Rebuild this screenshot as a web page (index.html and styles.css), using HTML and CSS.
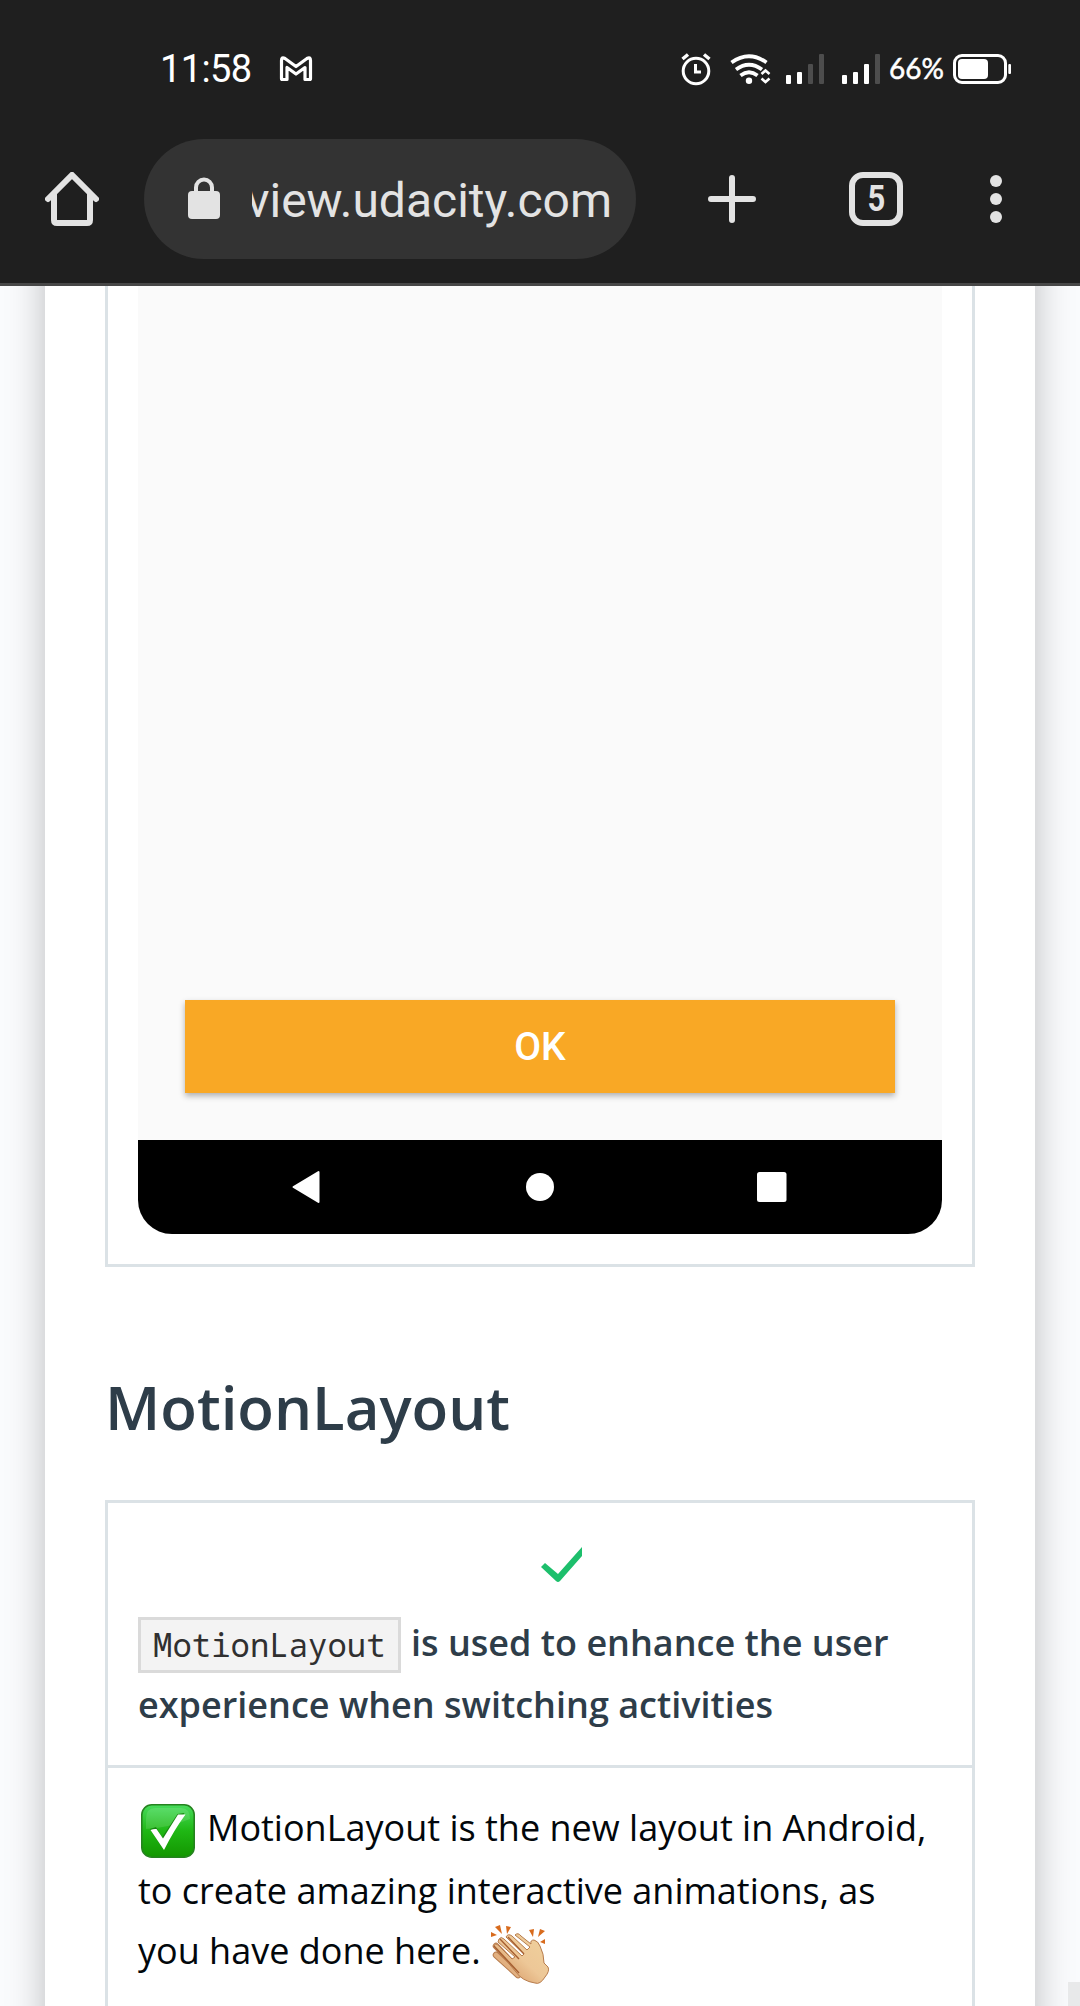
FILE: index.html
```html
<!DOCTYPE html>
<html lang="en">
<head>
<meta charset="utf-8">
<title>Project review</title>
<link rel="stylesheet" href="styles.css">
</head>
<body>
<header class="chrome">
  <div class="status">
    <span class="clock">11:58</span>
    <svg class="gmail" viewBox="0 0 36 30" width="36" height="30"><path d="M3.500 24.500V6.500Q3.500 2.500 7 4.500L18 12.500L29 4.500Q32.500 2.500 32.500 6.500V24.500Q32.500 25.500 31.500 25.500H27V13.500L18 20L9 13.500V25.500H4.500Q3.500 25.500 3.500 24.500Z" fill="none" stroke="#fff" stroke-width="3.200" stroke-linejoin="round"/></svg>
    <svg class="icons" viewBox="0 0 204 36" width="204" height="36">
      <g fill="none" stroke="#fff">
        <circle cx="18" cy="20" r="12.800" stroke-width="3"/>
        <path d="M17.500 13V21H23" stroke-width="3"/>
        <path d="M4.500 8L10 3.500M31.500 8L26 3.500" stroke-width="3.500"/>
        <path d="M53.500 11.500Q71 -1 88.500 11.500M58 18.500Q71 9 84 18.500M62.500 24.500Q71 18 79.500 24.500" stroke-width="3.800"/>
        <path d="M83.500 23L87.500 19.500L91.500 23M83.500 27.500L87.500 31L91.500 27.500" stroke-width="2.600"/>
      </g>
      <g fill="#fff">
        <circle cx="71" cy="29.800" r="3.200"/>
        <rect x="108" y="24" width="5" height="9" rx="1"/><rect x="119" y="21" width="5" height="12" rx="1"/>
        <rect x="164" y="24" width="5" height="9" rx="1"/><rect x="175" y="21" width="5" height="12" rx="1"/><rect x="186" y="13" width="5" height="20" rx="1"/>
      </g>
      <g fill="#4d4d4d"><rect x="130" y="13" width="5" height="20" rx="1"/><rect x="141" y="3" width="5" height="30" rx="1"/><rect x="197" y="3" width="5" height="30" rx="1"/></g>
    </svg>
    <span class="pct">66%</span>
    <svg class="battery" viewBox="0 0 60 32" width="60" height="32"><rect x="2.500" y="2.500" width="51" height="27" rx="7.500" fill="none" stroke="#fff" stroke-width="3"/><rect x="6" y="6" width="30" height="20" rx="4" fill="#fff"/><rect x="56.300" y="11" width="2.700" height="10" rx="1" fill="#fff"/></svg>
  </div>
  <div class="toolbar">
    <svg class="home" viewBox="0 0 54 54" width="54" height="54"><path d="M3 27L27 3L51 27M9 22V48Q9 51 12 51H42Q45 51 45 48V22" fill="none" stroke="#e3e3e3" stroke-width="6" stroke-linecap="round"/></svg>
    <div class="omnibox">
      <svg class="lock" viewBox="0 0 32 42" width="32" height="42"><rect y="14" width="32" height="28" rx="4" fill="#e3e3e3"/><path d="M8 15V10.500a8 8 0 0 1 16 0V15" fill="none" stroke="#e3e3e3" stroke-width="4"/></svg>
      <div class="url">view.udacity.com</div>
    </div>
    <svg class="plus" viewBox="0 0 48 48" width="48" height="48"><path d="M24 3V45M3 24H45" stroke="#e3e3e3" stroke-width="6" stroke-linecap="round"/></svg>
    <div class="tabs"><span>5</span></div>
    <svg class="more" viewBox="0 0 12 48" width="12" height="48" fill="#e3e3e3"><circle cx="6" cy="6" r="6"/><circle cx="6" cy="24" r="6"/><circle cx="6" cy="42" r="6"/></svg>
  </div>
</header>
<main class="viewport">
  <article class="sheet">
    <section class="shot">
      <div class="screen"><button class="ok">OK</button></div>
      <svg class="navbar" viewBox="0 0 804 94" width="804" height="94"><path d="M0 0H804V60a34 34 0 0 1-34 34H34a34 34 0 0 1-34-34Z"/><g fill="#fff"><path d="M155.500 47L180.500 32V62Z" stroke="#fff" stroke-width="2" stroke-linejoin="round"/><circle cx="402" cy="47" r="14"/><rect x="619" y="32" width="29.500" height="30" rx="2.500"/></g></svg>
    </section>
    <h2>MotionLayout</h2>
    <section class="rubric">
      <div class="criterion">
        <svg class="tick" viewBox="0 0 42 36" width="42" height="36"><path d="M0 20L4 16L17 27L41 0V9L19 34Q17 36 15 34Z" fill="#1dbf6c"/></svg>
        <div class="line"><code>MotionLayout</code><span>is used to enhance the user</span></div>
        <div class="line"><span>experience when switching activities</span></div>
      </div>
      <div class="comment">
        <div class="line">
          <svg class="check" viewBox="0 0 54 54" width="54" height="54"><defs><linearGradient id="g" x1="0" y1="0" x2="0" y2="1"><stop offset="0" stop-color="#47dc5c"/><stop offset=".5" stop-color="#1fb714"/><stop offset="1" stop-color="#139600"/></linearGradient></defs><rect x=".8" y=".8" width="52.400" height="52.400" rx="10" fill="url(#g)" stroke="#25831f" stroke-width="1.600"/><path d="M5 15Q5 4 14 4H40Q49 4 49 15Q27 24 5 25Z" fill="#fff" opacity=".12"/><path d="M10 26L16 24L22 34.500L37.500 11L44.500 10L23 46Z" fill="#178610" transform="translate(-1 -1)"/><path d="M9.500 26Q13 24.500 15.500 25L22 34.500L37 10.500H44.500Q33 26 23 46Z" fill="#fff"/></svg>
          <span class="first">MotionLayout is the new layout in Android,</span>
        </div>
        <div class="line"><span>to create amazing interactive animations, as</span></div>
        <div class="line last"><span>you have done here.</span>
          <svg class="clap" viewBox="0 0 60 60" width="60" height="60"><defs><linearGradient id="s" x1="0" y1="1" x2="1" y2="0"><stop offset="0" stop-color="#cf8a55"/><stop offset=".5" stop-color="#edc797"/><stop offset="1" stop-color="#f0d29d"/></linearGradient></defs>
            <g stroke="#b77c4d" stroke-width="6.500" stroke-linecap="round"><path d="M6 30L28 50M6 21L26 42"/></g><g stroke="#e2b080" stroke-width="4.500" stroke-linecap="round"><path d="M6 30L28 50M6 21L26 42"/></g>
            <path d="M9 14Q11 11 14 14L32 31L34 29L16 12Q18 8 22 11L37 25L40 22L25 10Q28 7 31 11L41 19Q40 15 44 15Q48 16 50 21Q54 29 54 38L58 42Q60 46 55 52Q50 60 45 58Q32 56 26 47L4 21Q5 17 9 21L22 34L25 32L8 17Z" fill="url(#s)" stroke="#b77c4d" stroke-width="1"/>
            <path d="M10 14L29 34M18 12L34 29M4 21L29 48" fill="none" stroke="#a65f31" stroke-width="1.400"/>
            <path d="M5 2L10 0L12 9ZM16 1L21 2L17 9ZM1 7L7 10L1 12ZM39 5L44 4L43 12ZM50 4L55 6L48 12ZM50 17L55 14L55 19Z" fill="#d86b1d"/></svg>
        </div>
      </div>
    </section>
  </article>
  <div class="scrollbar"></div>
</main>
</body>
</html>
```
FILE: styles.css
```css
* { box-sizing: border-box; }
html, body { margin: 0; height: 2006px; overflow: hidden; }
body { font-family: "Open Sans", sans-serif; background: #fafbfd; }
svg { display: block; flex: none; }

.chrome { height: 286px; background: #1f1f1f; border-bottom: 3px solid #474747; position: relative; z-index: 1; }
.status { height: 139px; padding: 52px 0 0 160px; display: flex; align-items: flex-start; color: #fff; }
.clock { width: 118px; font: 38px/35px Roboto, sans-serif; letter-spacing: -.6px; }
.gmail { margin-top: 2px; }
.icons { margin-left: 364px; margin-top: -1px; }
.pct { width: 63px; margin-left: 7px; font: 28px/32px Lato, sans-serif; -webkit-text-stroke: .5px #fff; }
.battery { margin-top: 1px; }
.toolbar { height: 120px; display: flex; align-items: center; padding-left: 45px; }
.omnibox { width: 492px; height: 120px; margin-left: 45px; border-radius: 60px; background: #333; display: flex; align-items: center; padding-left: 44px; }
.lock { margin-bottom: 2px; }
.url { width: 360px; margin-left: 32px; padding-top: 4px; overflow: hidden; display: flex; justify-content: flex-end; font: 48px/60px Roboto, sans-serif; color: #e3e3e3; }
.plus { margin-left: 72px; }
.tabs { width: 54px; height: 54px; margin-left: 93px; border: 6px solid #e3e3e3; border-radius: 14px; display: flex; justify-content: center; align-items: center; font: bold 36px/42px Roboto, sans-serif; color: #e3e3e3; }
.tabs span { transform: scaleX(.86); }
.more { margin-left: 87px; }

.viewport { height: 1720px; padding: 0 45px; overflow: hidden; display: flex; position: relative; }
.sheet { width: 990px; height: 1860px; margin-top: -60px; background: #fff; box-shadow: 0 0 36px rgba(0, 0, 0, .25); padding: 60px 60px 0; }
.shot { height: 981px; border: 3px solid #dbe2e6; border-top: 0; padding: 0 30px; background: #fff; }
.screen { height: 854px; background: #fafafa; padding: 714px 47px 0; }
.ok { display: block; width: 710px; height: 93px; border: 0; padding: 2px 0 0; background: #f9a825; box-shadow: 0 3px 6px rgba(0, 0, 0, .3); color: #fff; font: 500 39px/91px Roboto, sans-serif; }
h2 { margin: 0; height: 233px; padding-top: 99px; font-size: 60px; line-height: 82px; font-weight: 600; color: #2e3d49; }
.rubric { height: 600px; border: 3px solid #dbe2e6; }
.criterion { height: 265px; border-bottom: 3px solid #dbe2e6; padding: 44px 30px 0; font-size: 36px; font-weight: 600; color: #2e3d49; }
.tick { margin: 0 0 29px 403px; }
.line { height: 62px; display: flex; align-items: flex-start; white-space: nowrap; line-height: 62px; }
code { height: 56px; width: 263px; margin: 5px 10px 0 0; border: 3px solid #dadada; background: #f3f3f3; padding-left: 12px; font: 32.300px/48px "Noto Sans Mono", "DejaVu Sans Mono", monospace; color: #303030; }
.comment { padding: 29px 30px 0; font-size: 36px; color: #02070b; }
.comment .line { height: 63px; }
.check { margin: 7px 12px 0 3px; }
.last { margin-top: -3px; }
.clap { margin: 5px 0 0 9px; }
.scrollbar { position: absolute; right: 0; top: 1696px; width: 12px; height: 24px; background: #e8e9ea; }
```
